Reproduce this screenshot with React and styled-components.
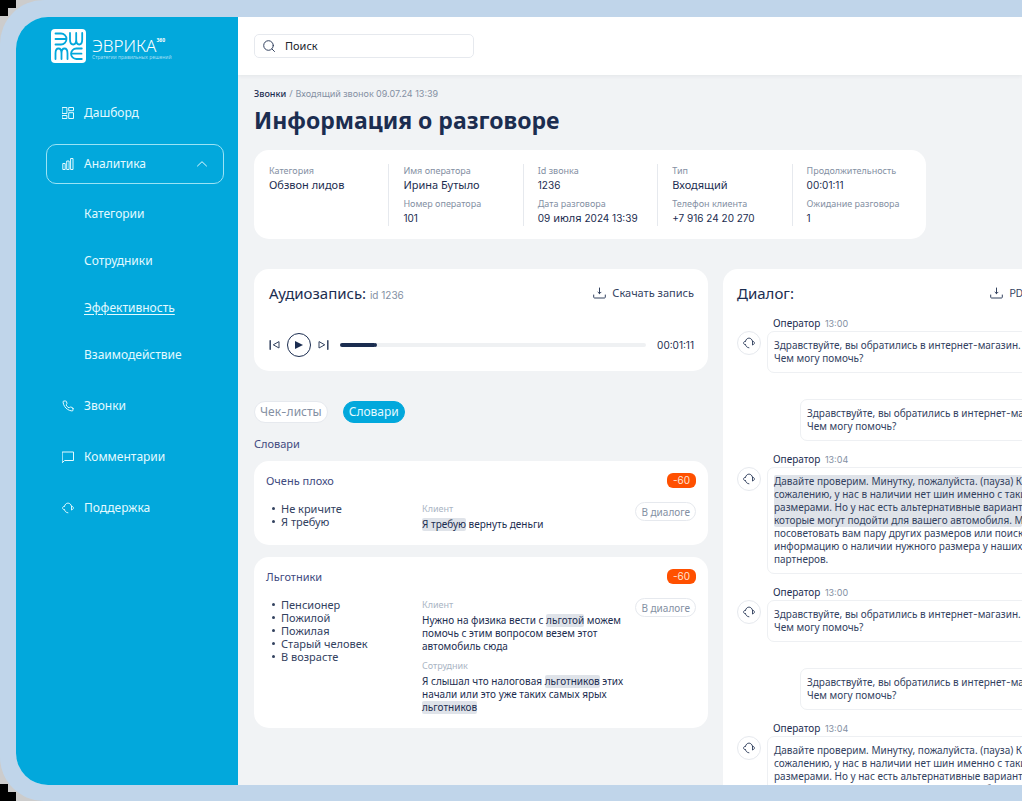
import React from 'react';
import styled, { createGlobalStyle, css } from 'styled-components';

const navy = '#1b2d50';
const ink = '#33425f';
const grey = '#8490a3';
const pale = '#aab5c4';
const line = '#e6e9ee';
const cyan = '#02a8dc';

const GlobalStyle = createGlobalStyle`
  * { box-sizing: border-box; }
  html { background: #cccccc; }
  body {
    margin: 0;
    font-family: "Noto Sans", "Open Sans", sans-serif;
    color: ${ink};
    background:
      linear-gradient(#000, #000) 0 0 / 16px 8px no-repeat,
      linear-gradient(#000, #000) 0 8px / 8px 8px no-repeat,
      linear-gradient(#000, #000) 0 100% / 16px 9px no-repeat,
      linear-gradient(#000, #000) 0 calc(100% - 9px) / 8px 8px no-repeat,
      #cccccc;
  }
  h1, h2, h3, p, ul, dl, dd { margin: 0; padding: 0; }
  ul { list-style: none; }
  button, input { font: inherit; color: inherit; }
  button { background: none; border: 0; padding: 0; cursor: pointer; }
  a { color: inherit; text-decoration: none; }
`;

const Bezel = styled.div`
  height: 100vh;
  padding: 17px 0 16px 16px;
  background: #c0d5ea;
  border-radius: 44px 0 0 44px;
  overflow: hidden;
`;

const Screen = styled.div`
  display: flex;
  height: 100%;
  background: #f1f3f5;
  border-radius: 32px 0 0 32px;
  overflow: hidden;
`;

const Sidebar = styled.aside`
  flex: 0 0 222px;
  padding: 12px 14px 0 30px;
  background: ${cyan};
  color: #e4faff;
`;

const Logo = styled.a`
  display: flex;
  gap: 6px;
  height: 34px;
  margin: 0 0 30px 5px;
  color: #fff;
`;

const LogoText = styled.span`
  display: flex;
  flex-direction: column;
  padding-top: 8px;
`;

const LogoName = styled.span`
  display: flex;
  font-size: 17px;
  line-height: 17px;
  font-weight: 300;
`;

const LogoSup = styled.span`
  font-size: 5px;
  font-weight: 700;
  line-height: 6px;
`;

const LogoTagline = styled.span`
  font-size: 5px;
  line-height: 6px;
  color: #a3def2;
  white-space: nowrap;
`;

const NavList = styled.ul`
  display: grid;
  gap: 11px;
`;

const SubList = styled.ul`
  display: grid;
  gap: 7px;
  margin-top: 10px;
`;

const navBase = css`
  display: flex;
  align-items: center;
  width: 100%;
  height: 40px;
  font-size: 12px;
  line-height: 16px;
`;

const NavLink = styled.a`
  ${navBase}
  gap: 10px;
  padding-left: 16px;
`;

const NavToggle = styled.button`
  ${navBase}
  gap: 10px;
  padding: 0 15px;
  border: 1px solid #9be3f5;
  border-radius: 10px;
  text-align: left;
`;

const NavLabel = styled.span`
  flex: 1;
`;

const SubLink = styled.a`
  ${navBase}
  padding-left: 38px;
  text-decoration: ${(p) => (p.$current ? 'underline' : 'none')};
  text-underline-offset: 2px;
`;

const Main = styled.main`
  flex: 1;
  min-width: 0;
  overflow: hidden;
`;

const TopBar = styled.header`
  display: flex;
  align-items: center;
  height: 58px;
  padding: 0 16px;
  background: #fff;
  box-shadow: 0 1px 4px rgba(40, 50, 70, 0.07);
`;

const SearchBox = styled.label`
  display: flex;
  align-items: center;
  gap: 10px;
  width: 220px;
  height: 24px;
  padding: 0 8px;
  border: 1px solid ${line};
  border-radius: 5px;
  color: ${ink};
`;

const SearchInput = styled.input`
  flex: 1;
  min-width: 0;
  padding: 0;
  border: 0;
  outline: 0;
  background: none;
  font-size: 11px;
  line-height: 16px;
  &::placeholder { color: #20242c; opacity: 1; }
`;

const Content = styled.div`
  padding: 12px 16px 0;
`;

const Crumbs = styled.nav`
  display: flex;
  gap: 3px;
  font-size: 9px;
  line-height: 14px;
  color: ${grey};
`;

const CrumbLink = styled.a`
  color: ${navy};
  font-weight: 500;
`;

const PageTitle = styled.h1`
  margin: 3px 0 14px;
  font-size: 23px;
  line-height: 32px;
  font-weight: 700;
  color: ${navy};
`;

const Card = styled.section`
  background: #fff;
  border-radius: 15px;
`;

const InfoCard = styled(Card)`
  display: grid;
  grid-template-columns: repeat(5, 1fr);
  max-width: 672px;
  min-height: 89px;
  padding: 14px 0 13px;
`;

const InfoColumn = styled.dl`
  padding-left: 15px;
  & + & {
    padding-left: 14px;
    border-left: 1px solid ${line};
  }
`;

const InfoLabel = styled.dt`
  font-size: 9px;
  line-height: 13px;
  color: ${grey};
`;

const InfoValue = styled.dd`
  font-size: 11px;
  line-height: 16px;
  color: ${navy};
  &:not(:last-child) { margin-bottom: 4px; }
`;

const Num = styled.span`
  font-family: Inter, "Noto Sans", sans-serif;
  font-size: ${(p) => (p.$small ? '10px' : 'inherit')};
  line-height: 1;
`;

const Columns = styled.div`
  display: flex;
  align-items: flex-start;
  gap: 15px;
  margin-top: 30px;
`;

const LeftColumn = styled.div`
  flex: 0 0 454px;
`;

const AudioCard = styled(Card)`
  padding: 14px 14px 14px 15px;
`;

const CardHead = styled.div`
  display: flex;
  align-items: center;
  justify-content: space-between;
  height: 20px;
`;

const CardTitle = styled.h2`
  font-size: 15px;
  line-height: 20px;
  font-weight: 400;
  color: ${navy};
`;

const TitleNote = styled.small`
  font-family: Inter, "Noto Sans", sans-serif;
  font-size: 10px;
  line-height: 1;
  color: ${grey};
`;

const IconAction = styled.button`
  display: flex;
  align-items: center;
  gap: 6px;
  font-size: 11px;
  line-height: 16px;
  color: ${ink};
`;

const Player = styled.div`
  display: flex;
  align-items: center;
  margin-top: 30px;
  height: 24px;
`;

const SkipButton = styled.button`
  display: flex;
`;

const PlayButton = styled.button`
  display: flex;
  align-items: center;
  justify-content: center;
  width: 24px;
  height: 24px;
  margin: 0 7px;
  border: 1px solid ${navy};
  border-radius: 50%;
`;

const Track = styled.input`
  appearance: none;
  flex: 1;
  height: 4px;
  margin: 0 11px;
  border-radius: 2px;
  background: linear-gradient(to right, ${navy} 11%, #eff1f3 11%);
  &::-webkit-slider-thumb {
    appearance: none;
    width: 4px;
    height: 4px;
    border-radius: 50%;
    background: ${navy};
  }
`;

const Time = styled(Num)`
  font-size: 10px;
  line-height: 16px;
  color: ${navy};
`;

const Tabs = styled.div`
  display: flex;
  gap: 15px;
  margin-top: 30px;
`;

const Tab = styled.button`
  height: 22px;
  padding: 0 5px;
  border: 1px solid ${(p) => (p.$active ? cyan : line)};
  border-radius: 11px;
  background: ${(p) => (p.$active ? cyan : '#fff')};
  color: ${(p) => (p.$active ? '#e4faff' : grey)};
  font-size: 12px;
  line-height: 16px;
`;

const SectionLabel = styled.h2`
  margin: 13px 0 9px;
  font-size: 11px;
  line-height: 16px;
  font-weight: 400;
  color: #414a80;
`;

const Dictionaries = styled.div`
  display: grid;
  gap: 12px;
`;

const DictCard = styled(Card)`
  padding: 12px 12px 14px;
`;

const DictHead = styled.div`
  display: flex;
  align-items: center;
  justify-content: space-between;
  height: 15px;
  margin-bottom: 14px;
`;

const DictTitle = styled.h3`
  font-size: 11px;
  line-height: 16px;
  font-weight: 400;
  color: #414a80;
`;

const Score = styled(Num)`
  padding: 0 6px;
  border-radius: 6px;
  background: #ff5000;
  color: #ffe3d2;
  font-size: 10px;
  line-height: 15px;
`;

const DictBody = styled.div`
  display: grid;
  grid-template-columns: 156px 206px 1fr;
  align-items: start;
  justify-items: start;
`;

const Words = styled.ul`
  padding-left: 6px;
  font-size: 11px;
  line-height: 13px;
`;

const Word = styled.li`
  display: flex;
  align-items: center;
  gap: 6px;
  &::before {
    content: "";
    width: 3px;
    height: 3px;
    border-radius: 50%;
    background: ${ink};
  }
`;

const Quotes = styled.div`
  display: grid;
  gap: 6px;
`;

const Speaker = styled.p`
  margin-bottom: 3px;
  font-size: 9px;
  line-height: 13px;
  color: ${pale};
`;

const QuoteText = styled.p`
  font-size: 10px;
  line-height: 13px;
  color: ${navy};
`;

const Mark = styled.mark`
  display: inline-block;
  border-radius: 2px;
  background: #dfe3e9;
  color: inherit;
`;

const DialogLink = styled.button`
  justify-self: end;
  height: 19px;
  padding: 0 5px;
  border: 1px solid ${line};
  border-radius: 10px;
  font-size: 10px;
  line-height: 14px;
  color: ${grey};
  white-space: nowrap;
`;

const DialogCard = styled(Card)`
  flex: 1 0 320px;
  min-width: 0;
  padding: 14px 14px 30px;
`;

const Thread = styled.ul`
  display: grid;
  grid-template-columns: minmax(0, 1fr);
  gap: 12px;
  margin-top: 14px;
`;

const Message = styled.li`
  display: grid;
  grid-template-columns: 24px minmax(0, 1fr);
  column-gap: 6px;
  row-gap: 1px;
  padding-left: ${(p) => (p.$reply ? '33px' : '0')};
  margin-top: ${(p) => (p.$reply ? '14px' : '0')};
`;

const Author = styled.p`
  grid-column: 2;
  padding-left: 6px;
  font-size: 10px;
  line-height: 13px;
  color: ${navy};
`;

const Stamp = styled.time`
  margin-left: 2px;
  font-family: Inter, "Noto Sans", sans-serif;
  font-size: 9px;
  line-height: 1;
  color: ${grey};
`;

const Avatar = styled.span`
  display: flex;
  align-items: center;
  justify-content: center;
  width: 24px;
  height: 24px;
  border: 1px solid ${line};
  border-radius: 50%;
`;

const Bubble = styled.p`
  grid-column: 2;
  padding: 7px 6px;
  border: 1px solid #eef0f3;
  border-radius: 7px;
  font-size: 10px;
  line-height: 13px;
  white-space: pre;
`;

const Passage = styled(Mark)`
  display: block;
`;

const Svg = ({ w, h, box, children }) => (
  <svg width={w} height={h} viewBox={box || `0 0 ${w} ${h}`} fill="none" stroke="currentColor" strokeWidth="1" strokeLinecap="round" strokeLinejoin="round" aria-hidden="true">
    {children}
  </svg>
);

const GridIcon = () => (
  <Svg w={12} h={12}>
    <path d="M.5.5h4.400v6H.5zM7.100.5h4.400v3.200H7.100zM.5 8.500h4.400v3H.5zM7.100 5.700h4.400v5.800H7.100z" strokeLinejoin="miter" />
  </Svg>
);

const BarsIcon = () => (
  <Svg w={12} h={12}>
    <path d="M1.200 5.500h2v6h-2zM5.100 3h2v8.500h-2zM9 .5h2v11H9z" />
  </Svg>
);

const PhoneIcon = () => (
  <Svg w={12} h={12} box="0 0 24 24">
    <path strokeWidth="2" d="M22 16.900v3a2 2 0 0 1-2.200 2 19.800 19.800 0 0 1-8.600-3.100 19.500 19.500 0 0 1-6-6A19.800 19.800 0 0 1 2.100 4.200 2 2 0 0 1 4.100 2h3a2 2 0 0 1 2 1.700c.1 1 .4 1.900.7 2.800a2 2 0 0 1-.5 2.100L8.100 9.900a16 16 0 0 0 6 6l1.300-1.300a2 2 0 0 1 2.100-.4c.9.3 1.800.6 2.800.7a2 2 0 0 1 1.700 2z" />
  </Svg>
);

const CommentIcon = () => (
  <Svg w={12} h={12}>
    <path d="M.5 1h11v8.500H2.600L.5 11.400z" />
  </Svg>
);

const HeadsetIcon = () => (
  <Svg w={12} h={12} box="0 0 13 12">
    <path d="M2.700 4.100C3.200 2 4.700.7 6.500.7s3.300 1.300 3.800 3.400M2.700 4.100C1.400 4.200.6 5 .6 6s.8 1.800 2.100 1.900M10.300 4.100c1.300.1 2.100.9 2.100 1.900s-.8 1.800-2.100 1.900M2.700 7.900c.5 1.900 1.700 3.100 3.700 3.300M10.300 4.100v3.800" />
  </Svg>
);

const ChevronUp = () => (
  <Svg w={12} h={8}>
    <path d="M1.500 6 6 1.700 10.500 6" />
  </Svg>
);

const SearchIcon = () => (
  <Svg w={12} h={12}>
    <circle cx="5.500" cy="5.500" r="4.800" />
    <path d="m9 9 2.500 2.500" />
  </Svg>
);

const DownloadIcon = () => (
  <Svg w={13} h={12}>
    <path d="M6.500 1v5.500M5 5.200l1.500 1.500L8 5.200M.7 8v2.200c0 .5.300.8.800.8h10c.5 0 .8-.3.800-.8V8" />
  </Svg>
);

const PrevIcon = () => (
  <Svg w={11} h={10}>
    <path d="M10 2v6L4.600 5z" />
    <path d="M1.200.8v8.400" strokeWidth="1.500" />
  </Svg>
);

const NextIcon = () => (
  <Svg w={11} h={10}>
    <path d="M1 2v6l5.400-3z" />
    <path d="M9.800.8v8.400" strokeWidth="1.500" />
  </Svg>
);

const PlayIcon = () => (
  <svg width="8" height="8" viewBox="0 0 8 8" fill={navy} aria-hidden="true">
    <path d="M0 0v8l8-4z" />
  </svg>
);

const LogoMark = () => (
  <svg width="35" height="34" viewBox="0 0 35 34" aria-hidden="true">
    <rect width="35" height="34" rx="4" fill="#fff" />
    <g fill="none" stroke={cyan} strokeWidth="1.800" strokeLinecap="round">
      <path d="M4.500 4.500H10a5.500 5.500 0 0 1 0 11H4.500M4.500 10h10" />
      <path d="M19 4v6.500c0 3.200 1.500 5 3.200 5s3-1.500 3-5V4M25.200 10.500c0 3.500 1.300 5 3 5s3-1.800 3-5V4" />
      <path d="M4.500 30v-5.500c0-3.200 1.300-5 3-5s3 1.500 3 5V30M10.500 24.500c0-3.500 1.300-5 3-5s3 1.800 3 5V30" />
      <path d="M30.800 19.500h-5.500a5.200 5.200 0 0 0 0 10.500h5.500M20.500 24.700h10" />
    </g>
  </svg>
);

const infoColumns = [
  [['Категория', 'Обзвон лидов']],
  [['Имя оператора', 'Ирина Бутыло'], ['Номер оператора', <Num $small>101</Num>]],
  [['Id звонка', <Num $small>1236</Num>], ['Дата разговора', <><Num $small>09</Num> июля <Num $small>2024 13:39</Num></>]],
  [['Тип', 'Входящий'], ['Телефон клиента', <Num $small>+7 916 24 20 270</Num>]],
  [['Продолжительность', <Num $small>00:01:11</Num>], ['Ожидание разговора', <Num $small>1</Num>]],
];

const dictionaries = [
  {
    title: 'Очень плохо',
    words: ['Не кричите', 'Я требую'],
    quotes: [['Клиент', <><Mark>Я требую</Mark> вернуть деньги</>]],
  },
  {
    title: 'Льготники',
    words: ['Пенсионер', 'Пожилой', 'Пожилая', 'Старый человек', 'В возрасте'],
    quotes: [
      ['Клиент', <>Нужно на физика вести с <Mark>льготой</Mark> можем помочь с этим вопросом везем этот автомобиль сюда</>],
      ['Сотрудник', <>Я слышал что налоговая <Mark>льготников</Mark> этих начали или это уже таких самых ярых <Mark>льготников</Mark></>],
    ],
  },
];

const greeting = <>Здравствуйте, вы обратились в интернет<Num>-</Num>магазин.{'\n'}Чем могу помочь?</>;
const checking = 'Давайте проверим. Минутку, пожалуйста. (пауза) К\nсожалению, у нас в наличии нет шин именно с такими\nразмерами. Но у нас есть альтернативные варианты,\nкоторые могут подойти для вашего автомобиля. Могу';
const advising = 'посоветовать вам пару других размеров или поискать\nинформацию о наличии нужного размера у наших\nпартнеров.';

const thread = [
  { time: '13:00', text: greeting },
  { reply: true, text: greeting },
  { time: '13:04', marked: checking, text: advising },
  { time: '13:00', text: greeting },
  { reply: true, text: greeting },
  { time: '13:04', text: `${checking}\n${advising}` },
];

export default function App() {
  return (
    <>
      <GlobalStyle />
      <Bezel>
        <Screen>
          <Sidebar>
            <Logo href="#">
              <LogoMark />
              <LogoText>
                <LogoName>ЭВРИКА<LogoSup>360</LogoSup></LogoName>
                <LogoTagline>Стратегии правильных решений</LogoTagline>
              </LogoText>
            </Logo>
            <nav>
              <NavList>
                <li><NavLink href="#"><GridIcon />Дашборд</NavLink></li>
                <li>
                  <NavToggle type="button" aria-expanded="true">
                    <BarsIcon /><NavLabel>Аналитика</NavLabel><ChevronUp />
                  </NavToggle>
                  <SubList>
                    <li><SubLink href="#">Категории</SubLink></li>
                    <li><SubLink href="#">Сотрудники</SubLink></li>
                    <li><SubLink href="#" $current aria-current="page">Эффективность</SubLink></li>
                    <li><SubLink href="#">Взаимодействие</SubLink></li>
                  </SubList>
                </li>
                <li><NavLink href="#"><PhoneIcon />Звонки</NavLink></li>
                <li><NavLink href="#"><CommentIcon />Комментарии</NavLink></li>
                <li><NavLink href="#"><HeadsetIcon />Поддержка</NavLink></li>
              </NavList>
            </nav>
          </Sidebar>
          <Main>
            <TopBar>
              <SearchBox>
                <SearchIcon />
                <SearchInput type="search" placeholder="Поиск" aria-label="Поиск" />
              </SearchBox>
            </TopBar>
            <Content>
              <Crumbs>
                <CrumbLink href="#">Звонки</CrumbLink>
                <span>/</span>
                <span>Входящий звонок <Num>09.07.24 13:39</Num></span>
              </Crumbs>
              <PageTitle>Информация о разговоре</PageTitle>
              <InfoCard>
                {infoColumns.map((column, i) => (
                  <InfoColumn key={i}>
                    {column.map(([label, value]) => (
                      <React.Fragment key={label}>
                        <InfoLabel>{label}</InfoLabel>
                        <InfoValue>{value}</InfoValue>
                      </React.Fragment>
                    ))}
                  </InfoColumn>
                ))}
              </InfoCard>
              <Columns>
                <LeftColumn>
                  <AudioCard>
                    <CardHead>
                      <CardTitle>Аудиозапись: <TitleNote>id 1236</TitleNote></CardTitle>
                      <IconAction type="button"><DownloadIcon />Скачать запись</IconAction>
                    </CardHead>
                    <Player>
                      <SkipButton type="button" aria-label="Назад"><PrevIcon /></SkipButton>
                      <PlayButton type="button" aria-label="Воспроизвести"><PlayIcon /></PlayButton>
                      <SkipButton type="button" aria-label="Вперёд"><NextIcon /></SkipButton>
                      <Track type="range" min="0" max="100" defaultValue="11" aria-label="Позиция" />
                      <Time>00:01:11</Time>
                    </Player>
                  </AudioCard>
                  <Tabs>
                    <Tab type="button">Чек<Num>-</Num>листы</Tab>
                    <Tab type="button" $active>Словари</Tab>
                  </Tabs>
                  <SectionLabel>Словари</SectionLabel>
                  <Dictionaries>
                    {dictionaries.map((dict) => (
                      <DictCard key={dict.title}>
                        <DictHead>
                          <DictTitle>{dict.title}</DictTitle>
                          <Score>-60</Score>
                        </DictHead>
                        <DictBody>
                          <Words>
                            {dict.words.map((word) => <Word key={word}>{word}</Word>)}
                          </Words>
                          <Quotes>
                            {dict.quotes.map(([speaker, text]) => (
                              <div key={speaker}>
                                <Speaker>{speaker}</Speaker>
                                <QuoteText>{text}</QuoteText>
                              </div>
                            ))}
                          </Quotes>
                          <DialogLink type="button">В диалоге</DialogLink>
                        </DictBody>
                      </DictCard>
                    ))}
                  </Dictionaries>
                </LeftColumn>
                <DialogCard>
                  <CardHead>
                    <CardTitle>Диалог:</CardTitle>
                    <IconAction type="button"><DownloadIcon /><Num $small>PDF</Num></IconAction>
                  </CardHead>
                  <Thread>
                    {thread.map((message, i) => (
                      <Message key={i} $reply={message.reply}>
                        {message.time && <Author>Оператор <Stamp>{message.time}</Stamp></Author>}
                        {!message.reply && <Avatar><HeadsetIcon /></Avatar>}
                        <Bubble>
                          {message.marked && <Passage>{message.marked}</Passage>}
                          {message.text}
                        </Bubble>
                      </Message>
                    ))}
                  </Thread>
                </DialogCard>
              </Columns>
            </Content>
          </Main>
        </Screen>
      </Bezel>
    </>
  );
}
